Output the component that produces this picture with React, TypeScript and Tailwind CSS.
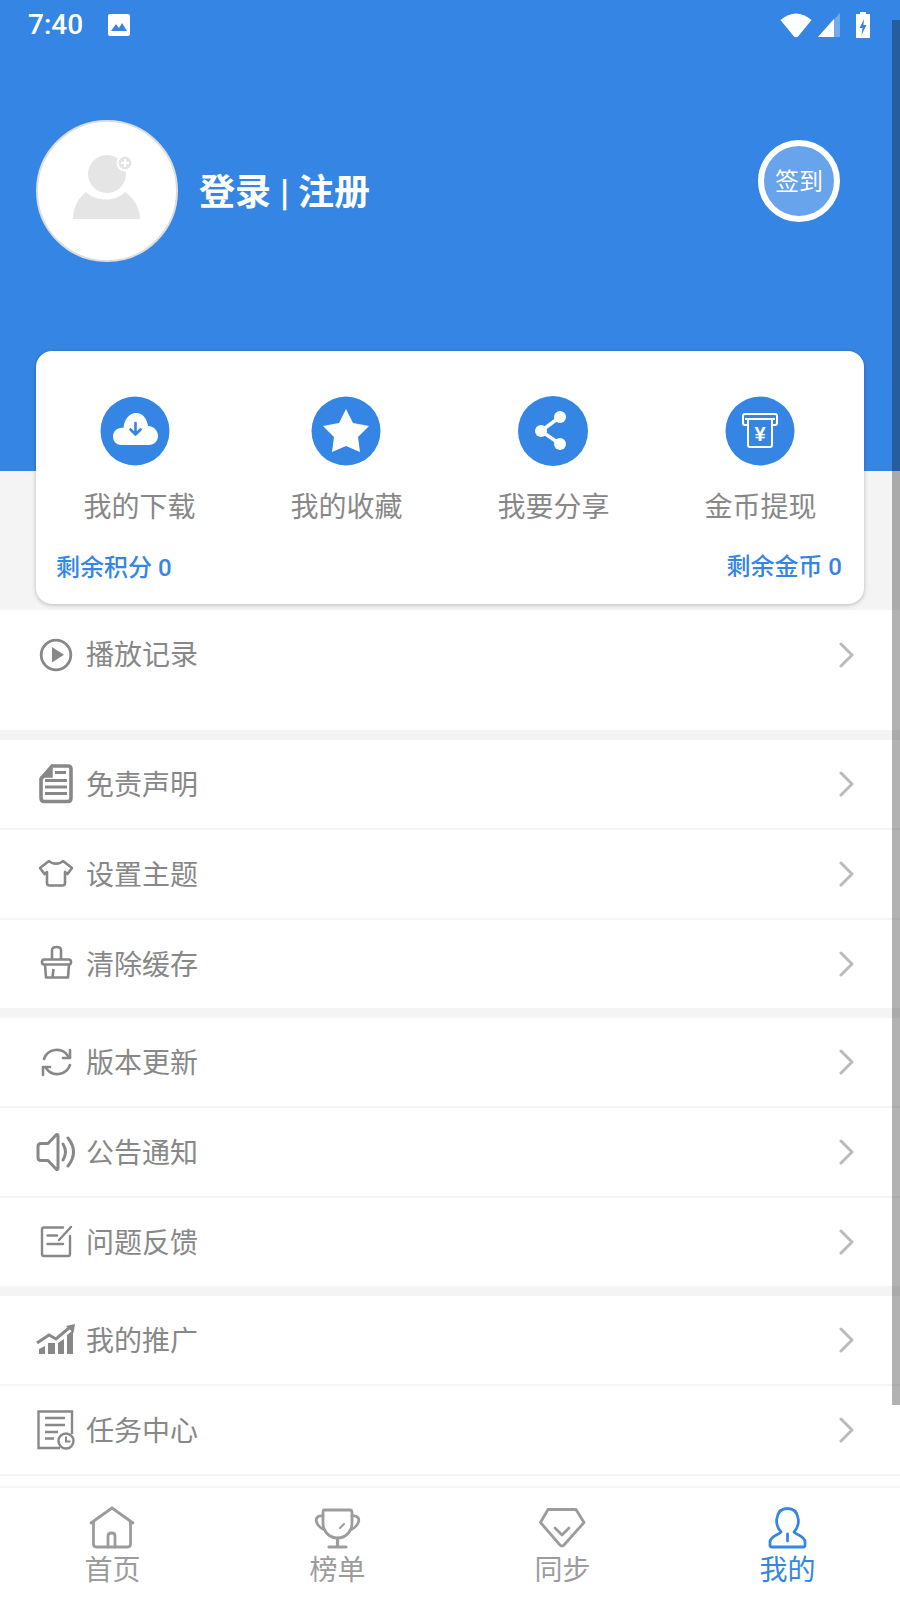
import { ReactNode } from 'react';

const GREY = '#888888';
const NAV_GREY = '#9c9c9c';
const BLUE = '#3586e4';

function PlayIcon() {
  return (
    <svg width="40" height="40" viewBox="0 0 40 40" fill="none">
      <circle cx="20" cy="20" r="14.8" stroke={GREY} strokeWidth="2.8" />
      <path d="M16 12 L28 19.8 L16 27.5 Z" fill={GREY} />
    </svg>
  );
}

function DocIcon() {
  return (
    <svg width="40" height="40" viewBox="0 0 40 40" fill="none" stroke={GREY} strokeWidth="3.6">
      <path d="M5 15 L16 2 H32 Q35 2 35 5 V34 Q35 37.5 32 37.5 H8 Q5 37.5 5 34 V15 Z" />
      <path d="M5 15 L16 2 V13 H5 Z" fill={GREY} strokeWidth="1.5" />
      <path d="M19 8.5 H30 M9 16.5 H31 M9 23 H31 M9 29.5 H31" strokeWidth="3" />
    </svg>
  );
}

function ShirtIcon() {
  return (
    <svg width="40" height="40" viewBox="0 0 40 40" fill="none" stroke={GREY} strokeWidth="2.6" strokeLinejoin="round">
      <path d="M13 7 C16 10.5 24 10.5 27 7 L36 14 L31.5 20 L29 18 V29 Q29 31.5 26.5 31.5 H13.5 Q11 31.5 11 29 V18 L8.5 20 L4 14 Z" />
    </svg>
  );
}

function BroomIcon() {
  return (
    <svg width="40" height="40" viewBox="0 0 40 40" fill="none" stroke={GREY} strokeWidth="2.6" strokeLinejoin="round">
      <path d="M16 15 V6 Q16 3 20.5 3 Q25 3 25 6 V15" />
      <path d="M8 15.5 H33 Q35 15.5 35 18 Q35 20.5 33 20.5 H8 Q6 20.5 6 18 Q6 15.5 8 15.5 Z" />
      <path d="M9 20.5 L10 33.5 H32 L33 20.5 M17.5 25 L16.5 33" />
    </svg>
  );
}

function RefreshIcon() {
  return (
    <svg width="40" height="40" viewBox="0 0 40 40" fill="none" stroke={GREY} strokeWidth="2.6" strokeLinecap="round" strokeLinejoin="round">
      <path d="M8 17 A13.5 13.5 0 0 1 32 14" />
      <path d="M34 8 L34 16 L27 16" />
      <path d="M34 23 A13.5 13.5 0 0 1 10 26" />
      <path d="M7 33 L7 25 L14 25" />
    </svg>
  );
}

function SpeakerIcon() {
  return (
    <svg width="40" height="40" viewBox="0 0 40 40" fill="none" stroke={GREY} strokeWidth="3" strokeLinecap="round" strokeLinejoin="round">
      <path d="M12 11.5 H5 Q2 11.5 2 14.5 V25.5 Q2 28.5 5 28.5 H12 L20 37 Q22 38.5 22 36 V4 Q22 1.5 20 3 Z" />
      <path d="M27 12 Q32 20 27 28" />
      <path d="M32 6 Q43 20 32 34" />
    </svg>
  );
}

function EditIcon() {
  return (
    <svg width="40" height="40" viewBox="0 0 40 40" fill="none" stroke={GREY} strokeWidth="2.4" strokeLinecap="round">
      <path d="M27 5.5 H8 Q6 5.5 6 7.5 V32 Q6 34 8 34 H32 Q34 34 34 32 V14" />
      <path d="M35 5 L23 18 M11.5 13.5 H21 M11.5 22 H27" />
    </svg>
  );
}

function ChartIcon() {
  return (
    <svg width="40" height="40" viewBox="0 0 40 40" fill={GREY}>
      <path d="M3 29 L9 26 V34 H3 Z M12 23 L19 23 V34 H12 Z M22 23 L28 19 V34 H22 Z M31 15 L37 10 V34 H31 Z" />
      <path d="M1 23 L13 15 L20 19 L33 8" fill="none" stroke={GREY} strokeWidth="3" />
      <path d="M39 4 L37.5 13 L30 6 Z" />
    </svg>
  );
}

function TaskIcon() {
  return (
    <svg width="40" height="40" viewBox="0 0 40 40" fill="none" stroke={GREY} strokeWidth="2.4">
      <path d="M36 24 V1.5 H2.5 V38 H24" />
      <path d="M9 8 H29 M9 15 H29 M9 22 H22 M9 28.5 H18" />
      <circle cx="30" cy="31" r="7.5" fill="white" />
      <path d="M30 26.5 V31.5 H34.5" strokeWidth="2" />
    </svg>
  );
}

function Row({ icon, label, tall, last }: { icon: ReactNode; label: string; tall?: boolean; last?: boolean }) {
  return (
    <div className={tall ? 'h-[120px] bg-white' : last ? 'h-[88px] bg-white' : 'h-[90px] bg-white border-b-2 border-[#f4f4f4]'}>
      <div className={tall ? 'h-[90px] flex items-center pl-[36px] pr-[45px]' : 'h-[88px] flex items-center pl-[36px] pr-[45px]'}>
        <div className="w-[40px] h-[40px] shrink-0">{icon}</div>
        <span className={tall ? 'ml-[10px] mt-[1px] text-[28px] leading-[40px] text-[#888888]' : 'ml-[10px] mt-[3px] text-[28px] leading-[40px] text-[#888888]'}>{label}</span>
        <svg className="ml-auto" width="16" height="26" viewBox="0 0 16 26" fill="none">
          <path d="M2 2 L13 13 L2 24" stroke="#bbbbbb" strokeWidth="3" strokeLinecap="round" strokeLinejoin="round" />
        </svg>
      </div>
    </div>
  );
}

function CardItem({ label, nudge, children }: { label: string; nudge?: boolean; children: ReactNode }) {
  return (
    <div className="flex flex-col items-center">
      <div className={nudge ? 'w-[70px] h-[70px] -translate-x-[5px]' : 'w-[70px] h-[70px] -translate-x-px'}>{children}</div>
      <span className="mt-[22px] text-[28px] leading-[40px] text-[#888888]">{label}</span>
    </div>
  );
}

function NavItem({ label, active, children }: { label: string; active?: boolean; children: ReactNode }) {
  return (
    <div className="flex flex-col items-center pt-[18px]">
      <div className="w-[48px] h-[44px] -translate-x-px">{children}</div>
      <span className={active ? 'mt-[1px] text-[28px] leading-[40px] text-[#3586e4]' : 'mt-[1px] text-[28px] leading-[40px] text-[#9c9c9c]'}>{label}</span>
    </div>
  );
}

export default function App() {
  return (
    <div className="relative h-[1600px] w-[900px] overflow-hidden flex flex-col bg-[#f4f4f4] font-['Roboto','Noto_Sans_CJK_SC',sans-serif]">
      {/* Scrollbar overlay */}
      <div className="absolute z-20 right-0 top-[20px] w-[8px] h-[1385px] bg-black/30" />

      <div className="flex-1 overflow-hidden">
        {/* Blue header */}
        <div className="h-[471px] bg-[#3586e4]">
          <div className="h-[49px] flex items-center pl-[28px] pr-[30px] text-white">
            <span className="text-[28px] leading-[49px] font-medium">7:40</span>
            <svg className="ml-[25px]" width="22" height="22" viewBox="0 0 22 22">
              <rect width="22" height="22" rx="2" fill="white" />
              <path d="M3 17 L8 10 L11 14 L14 9 L19 17 Z" fill="#3586e4" />
            </svg>
            <svg className="ml-auto" width="32" height="26" viewBox="0 0 32 26">
              <path d="M0.5 8 Q16 -5 31.5 8 L18 24.5 Q16 26 14 24.5 Z" fill="white" />
            </svg>
            <svg className="ml-[6px]" width="22" height="24" viewBox="0 0 22 24">
              <path d="M22 0 V24 H0 Z" fill="white" fillOpacity="0.3" />
              <path d="M16 6 V24 H0 Z" fill="white" />
            </svg>
            <svg className="ml-[16px]" width="14" height="26" viewBox="0 0 14 26">
              <path d="M4 0 H10 V2 H14 V26 H0 V2 H4 Z" fill="white" />
              <path d="M8 7 L3.5 16 H6.5 L5.5 23 L10.5 13 H7.5 Z" fill="#3586e4" />
            </svg>
          </div>

          <div className="mt-[71px] pl-[36px] pr-[60px] flex items-start">
            <div className="w-[142px] h-[142px] rounded-full bg-white border-2 border-[#dddddd]">
              <svg className="-m-[2px]" width="142" height="142" viewBox="0 0 142 142">
                <circle cx="71" cy="54" r="19" fill="#e5e5e5" />
                <path d="M37 99 C37 88 42 78 50 72 C60 82 80 82 89 72 C98 78 104 88 104 99 Z" fill="#e5e5e5" />
                <circle cx="89" cy="43" r="8.5" fill="white" />
                <circle cx="89" cy="43" r="6.5" fill="#e5e5e5" />
                <path d="M85 43 H93 M89 39 V47" stroke="white" strokeWidth="2" />
              </svg>
            </div>
            <div className="ml-[21px] mt-[48px] h-[50px] flex items-center text-white text-[36px] leading-[50px] font-bold">
              <span>登录</span>
              <span className="mx-[9px]">|</span>
              <span>注册</span>
            </div>
            <div className="ml-auto mt-[20px] w-[82px] h-[82px] rounded-full border-[6px] border-white bg-white/25 flex items-center justify-center pt-[2px] text-white text-[24px]">
              签到
            </div>
          </div>
        </div>

        {/* Card */}
        <div className="relative pb-[6px] px-[36px] -mt-[120px]">
          <div className="h-[253px] bg-white rounded-[16px] shadow-[0_1px_4px_rgba(0,0,0,0.25)] pt-[45px]">
            <div className="grid grid-cols-4">
              <CardItem label="我的下载" nudge>
                <svg width="70" height="70" viewBox="0 0 70 70">
                  <circle cx="35" cy="35" r="34.5" fill={BLUE} />
                  <path d="M22 49 C15 49 13 44 13 40.5 C13 35 18 31 23.5 32 C24 24 29 17 36 17 C43 17 47 23 48 30 C53 30 58 34 58 40 C58 45 54 49 49 49 Z" fill="white" />
                  <path d="M35.5 27 V38 M30.5 33.5 L35.5 38.5 L40.5 33.5" fill="none" stroke={BLUE} strokeWidth="2.6" strokeLinecap="round" strokeLinejoin="round" />
                </svg>
              </CardItem>
              <CardItem label="我的收藏">
                <svg width="70" height="70" viewBox="0 0 70 70">
                  <circle cx="35" cy="35" r="34.5" fill={BLUE} />
                  <path d="M35 13 L42 27 L58 30 L47 41 L49 56 L35 50 L21 56 L23 41 L12 30 L28 27 Z" fill="white" strokeLinejoin="round" />
                </svg>
              </CardItem>
              <CardItem label="我要分享">
                <svg width="70" height="70" viewBox="0 0 70 70">
                  <circle cx="35" cy="35" r="35" fill={BLUE} />
                  <path d="M42 21 L23 35 L42 48" fill="none" stroke="white" strokeWidth="3.5" />
                  <circle cx="42" cy="21" r="6" fill="white" />
                  <circle cx="23" cy="35" r="6" fill="white" />
                  <circle cx="42" cy="48" r="6" fill="white" />
                </svg>
              </CardItem>
              <CardItem label="金币提现">
                <svg width="70" height="70" viewBox="0 0 70 70">
                  <circle cx="35" cy="35" r="34.5" fill={BLUE} />
                  <path d="M22 29 H20 Q18 29 18 27 V20 Q18 18 20 18 H50 Q52 18 52 20 V27 Q52 29 50 29 H48" fill="none" stroke="white" strokeWidth="2" />
                  <path d="M20 23 H50 M23 23 V49 Q23 51 25 51 H45 Q47 51 47 49 V23" fill="none" stroke="white" strokeWidth="2" />
                  <text x="35" y="45" textAnchor="middle" fill="white" fontSize="20" fontWeight="700" fontFamily="Liberation Sans, sans-serif">¥</text>
                </svg>
              </CardItem>
            </div>
            <div className="mt-[23px] pl-[20px] pr-[22px] flex items-center justify-between text-[#3586e4] text-[24px] leading-[34px] font-medium">
              <span>剩余积分 0</span>
              <span className="-translate-y-px">剩余金币 0</span>
            </div>
          </div>
        </div>

        {/* Menu */}
        <Row tall icon={<PlayIcon />} label="播放记录" />
        <div className="mt-[10px]">
          <Row icon={<DocIcon />} label="免责声明" />
          <Row icon={<ShirtIcon />} label="设置主题" />
          <Row last icon={<BroomIcon />} label="清除缓存" />
        </div>
        <div className="mt-[10px]">
          <Row icon={<RefreshIcon />} label="版本更新" />
          <Row icon={<SpeakerIcon />} label="公告通知" />
          <Row last icon={<EditIcon />} label="问题反馈" />
        </div>
        <div className="mt-[10px]">
          <Row icon={<ChartIcon />} label="我的推广" />
          <Row icon={<TaskIcon />} label="任务中心" />
          <div className="h-[20px] bg-white" />
        </div>
      </div>

      {/* Bottom nav */}
      <div className="h-[114px] shrink-0 bg-white border-t-2 border-[#f4f4f4] grid grid-cols-4">
        <NavItem label="首页">
          <svg width="48" height="44" viewBox="0 0 48 44" fill="none" stroke={NAV_GREY} strokeWidth="2.8" strokeLinecap="round" strokeLinejoin="round">
            <path d="M3 17 L24 2 L45 17" />
            <path d="M5.5 16 V38 Q5.5 41 8.5 41 H39.5 Q42.5 41 42.5 38 V16" />
            <path d="M20 41 V30 Q20 27 23.5 27 Q27 27 27 30 V41" />
          </svg>
        </NavItem>
        <NavItem label="榜单">
          <svg width="48" height="44" viewBox="0 0 48 44" fill="none" stroke={NAV_GREY} strokeWidth="2.8" strokeLinecap="round" strokeLinejoin="round">
            <path d="M11 4 H37 Q39 4 39 7 V17 C39 26 32 32 24.5 32 C17 32 10 26 10 17 V7 Q10 4 11 4 Z" />
            <path d="M10 10 C4 9 2 13 4 17 C5 20 9 23 12 24" />
            <path d="M39 10 C45 9 47 13 45 17 C44 20 40 23 37 24" />
            <path d="M24.5 32 V41 M16 41 H33" strokeWidth="3.2" />
            <path d="M27 22 L31 18" strokeWidth="2" />
          </svg>
        </NavItem>
        <NavItem label="同步">
          <svg width="48" height="44" viewBox="0 0 48 44" fill="none" stroke={NAV_GREY} strokeWidth="2.8" strokeLinecap="round" strokeLinejoin="round">
            <path d="M10 3.5 H38 L46 16.5 L26 39 Q24 41 22 39 L2.5 16.5 Z" />
            <path d="M17 22 L24 29 L31 22" />
          </svg>
        </NavItem>
        <NavItem label="我的" active>
          <svg width="48" height="44" viewBox="0 0 48 44" fill="none" stroke={BLUE} strokeWidth="2.8" strokeLinecap="round" strokeLinejoin="round">
            <path d="M18 26 C14 22 13 16 14 12 C15 6 19 2.5 24.5 2.5 C30 2.5 34 6 35 12 C36 16 35 22 31 26 C33 29 42 30 42 36 V39 Q42 41 40 41 H9 Q7 41 7 39 V36 C7 30 16 29 18 26 Z" />
            <path d="M24.5 28 V35" />
          </svg>
        </NavItem>
      </div>
    </div>
  );
}
